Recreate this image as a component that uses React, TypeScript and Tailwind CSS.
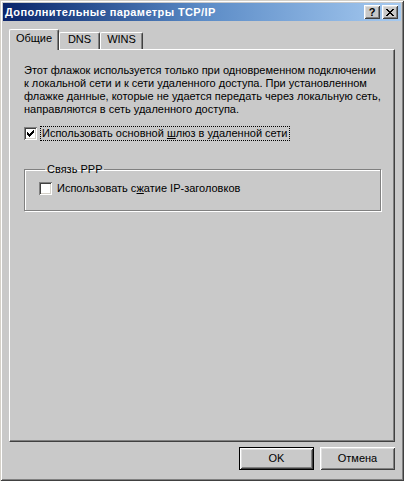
import type { ReactNode } from "react";

const RAISED =
  "shadow-[inset_1px_1px_0_#ffffff,inset_-1px_-1px_0_#404040,inset_2px_2px_0_#dedede,inset_-2px_-2px_0_#808080]";
const SUNKEN =
  "shadow-[inset_1px_1px_0_#808080,inset_-1px_-1px_0_#ffffff,inset_2px_2px_0_#404040,inset_-2px_-2px_0_#d4d0c8]";

const px = (rows: [number, number, number][]) =>
  rows.map(([x, y, w]) => `M${x} ${y}h${w}v1h-${w}z`).join("");

const CHECK = px([
  [6, 0, 1],
  [5, 1, 2],
  [0, 2, 1],
  [4, 2, 3],
  [0, 3, 2],
  [3, 3, 3],
  [0, 4, 5],
  [1, 5, 3],
  [2, 6, 1],
]);

const CROSS = px([
  [0, 0, 2],
  [6, 0, 2],
  [1, 1, 2],
  [5, 1, 2],
  [2, 2, 4],
  [3, 3, 2],
  [2, 4, 4],
  [1, 5, 2],
  [5, 5, 2],
  [0, 6, 2],
  [6, 6, 2],
]);

const CheckBox = ({ checked = false }: { checked?: boolean }) => (
  <span className={`flex h-[13px] w-[13px] shrink-0 items-center justify-center bg-white ${SUNKEN}`}>
    {checked && (
      <svg width="7" height="7" viewBox="0 0 7 7" shapeRendering="crispEdges">
        <path d={CHECK} fill="#000" />
      </svg>
    )}
  </span>
);

const CaptionButton = ({ children }: { children: ReactNode }) => (
  <div className={`flex h-[14px] w-[16px] items-center justify-center bg-[#c9c9c9] ${RAISED}`}>{children}</div>
);

const Tab = ({ label, active = false, width }: { label: string; active?: boolean; width: string }) => (
  <div
    className={`flex items-start justify-center rounded-t-[2px] border-l border-t border-r border-l-white border-t-white border-r-[#404040] bg-[#c9c9c9] shadow-[inset_-1px_0_0_#808080] ${width} ${
      active ? "relative z-10 -mb-[1px] h-[21px] pt-[2px]" : "h-[17px] pt-[0px]"
    }`}
  >
    {label}
  </div>
);

const PushButton = ({ label, isDefault = false }: { label: string; isDefault?: boolean }) => (
  <div
    className={`flex h-[23px] w-[75px] items-center justify-center bg-[#c9c9c9] ${
      isDefault ? "border border-black" : ""
    } ${RAISED}`}
  >
    {label}
  </div>
);

export default function App() {
  return (
    <div
      className={`flex h-[481px] w-[404px] flex-col bg-[#c9c9c9] p-[3px] font-['Liberation_Sans',Arial,sans-serif] text-[11px] leading-[13px] text-black shadow-[inset_1px_1px_0_#d4d0c8,inset_-1px_-1px_0_#404040,inset_2px_2px_0_#ffffff,inset_-2px_-2px_0_#808080]`}
    >
      {/* caption */}
      <div className="flex h-[18px] items-center bg-linear-to-r from-[#0a246a] via-[#5b8bc6] to-[#a6caf0] pl-[2px] pr-[3px]">
        <span className="flex-1 font-bold tracking-[0.4px] text-white">Дополнительные параметры TCP/IP</span>
        <div className="flex gap-[2px]">
          <CaptionButton>
            <span className="text-[11px] font-bold leading-none">?</span>
          </CaptionButton>
          <CaptionButton>
            <svg width="8" height="7" viewBox="0 0 8 7" shapeRendering="crispEdges">
              <path d={CROSS} fill="#000" />
            </svg>
          </CaptionButton>
        </div>
      </div>

      {/* tabs + page */}
      <div className="flex flex-col px-[6px] pt-[8px]">
        <div className="flex h-[20px] items-end">
          <Tab label="Общие" active width="w-[50px]" />
          <Tab label="DNS" width="w-[41px]" />
          <Tab label="WINS" width="w-[43px]" />
        </div>
        <div className="flex h-[393px] flex-col border-l border-t border-r border-b border-l-white border-t-white border-r-[#404040] border-b-[#404040] pl-[14px] pr-[13px] pt-[14px] shadow-[inset_-1px_-1px_0_#808080]">
          <p>
            Этот флажок используется только при одновременном подключении к локальной сети и к сети удаленного
            доступа. При установленном флажке данные, которые не удается передать через локальную сеть, направляются
            в сеть удаленного доступа.
          </p>

          <div className="mt-[11px] flex items-center gap-[4px]">
            <CheckBox checked />
            <span className="px-[1px] outline-1 outline-dotted outline-black">
              Использовать основной <u>ш</u>люз в удаленной сети
            </span>
          </div>

          <fieldset className="mt-[23px] h-[48px] border border-[#808080] px-[14px] shadow-[inset_1px_1px_0_#ffffff,1px_1px_0_#ffffff]">
            <legend className="ml-[6px] px-[2px]">Связь PPP</legend>
            <div className="mt-[6px] flex items-center gap-[5px]">
              <CheckBox />
              <span>
                Использовать с<u>ж</u>атие IP-заголовков
              </span>
            </div>
          </fieldset>
        </div>

        <div className="mt-[5px] flex justify-end gap-[6px]">
          <PushButton label="OK" isDefault />
          <PushButton label="Отмена" />
        </div>
      </div>
    </div>
  );
}
